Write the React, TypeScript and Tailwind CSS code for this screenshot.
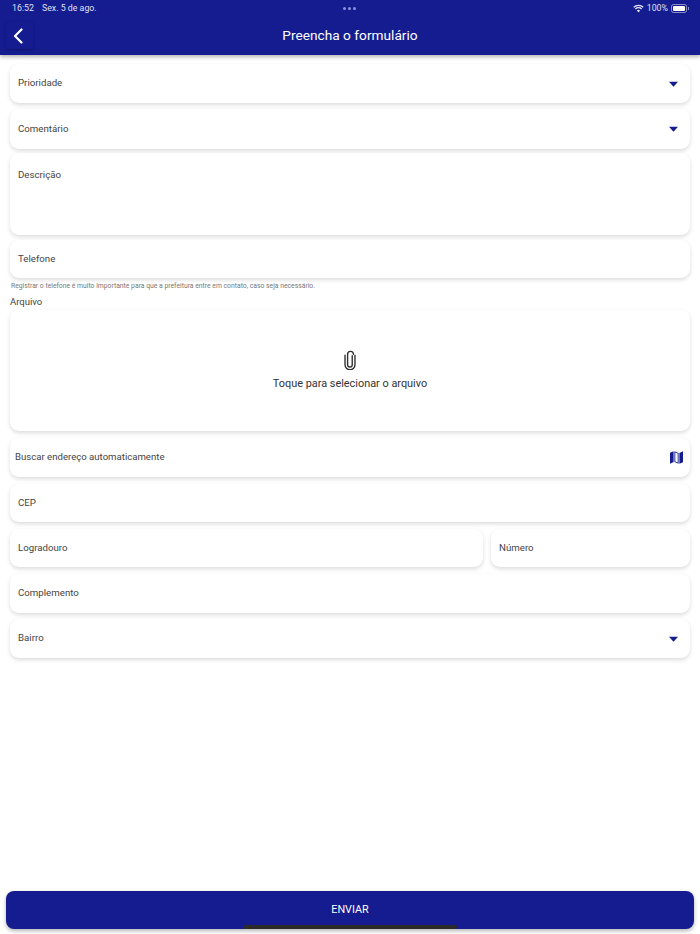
import { ReactNode } from "react";

const card = "bg-white rounded-[9px] shadow-[0_2px_4px_rgba(0,0,0,0.14)]";

function Caret() {
  return (
    <svg width="9" height="6" viewBox="0 0 10 6" className="text-[#141c8f]">
      <path d="M0 0.5h10L5 6z" fill="currentColor" />
    </svg>
  );
}

function Field({
  label,
  className = "",
  caret,
  children,
}: {
  label: string;
  className?: string;
  caret?: boolean;
  children?: ReactNode;
}) {
  return (
    <div className={`${card} flex items-center justify-between pl-2 pr-3 text-[9.7px] text-[#444] ${className}`}>
      <span>{label}</span>
      {caret && <Caret />}
      {children}
    </div>
  );
}

function WifiIcon() {
  return (
    <svg width="11" height="9" viewBox="0 0 12 9" fill="none" stroke="#e8e9f8" strokeWidth="1.4">
      <path d="M0.8 3.2a7.4 7.4 0 0 1 10.4 0" />
      <path d="M2.6 5a4.8 4.8 0 0 1 6.8 0" />
      <path d="M6 8.8 4.3 6.8a2.4 2.4 0 0 1 3.4 0z" fill="#e8e9f8" stroke="none" />
    </svg>
  );
}

function BatteryIcon() {
  return (
    <div className="flex items-center">
      <div className="w-[16px] h-[9px] rounded-[2.5px] border border-white/50 p-px">
        <div className="w-full h-full bg-white rounded-[1px]" />
      </div>
      <div className="w-px h-[3px] bg-white/50 ml-px" />
    </div>
  );
}

function ClipIcon() {
  return (
    <svg width="12" height="20" viewBox="0 0 14 22" fill="none" stroke="#2e2e2e" strokeWidth="1.6" strokeLinecap="round">
      <path d="M9.6 6v10.4a2.7 2.7 0 0 1-5.4 0V4.4a3.4 3.4 0 0 1 6.8 0" />
      <path d="M12.8 5.5v11a5.8 5.8 0 0 1-11.6 0V5.5" />
    </svg>
  );
}

function MapIcon() {
  return (
    <svg width="13" height="13" viewBox="0 0 13 13" className="text-[#141c8f]">
      <path d="M0 1.8 3.6 0.2v10.9L0 12.8zM9.4 1.9 13 0.2V11.2l-3.6 1.6z M4.4 0.3l4.2 1.6v10.8l-4.2-1.6V0.3z M5.3 1.6v8.9l2.4 0.9V2.5z" fill="currentColor" fillRule="evenodd" />
    </svg>
  );
}

export default function App() {
  return (
    <div className="relative h-[934px] bg-white flex flex-col font-['Roboto',sans-serif]">
      <header className="h-[55px] shrink-0 bg-[#141c8f] text-white shadow-[0_2px_4px_rgba(0,0,0,0.3)] flex flex-col">
        <div className="h-4 pt-px flex items-center justify-between pl-3 pr-[11px] text-[8.8px] text-[#dfe0f5] relative">
          <div className="flex gap-2">
            <span>16:52</span>
            <span>Sex. 5 de ago.</span>
          </div>
          <div className="absolute left-[343px] top-[7px] flex gap-[2px]">
            <div className="w-[3px] h-[3px] rounded-full bg-[#8f93dd]" />
            <div className="w-[3px] h-[3px] rounded-full bg-[#8f93dd]" />
            <div className="w-[3px] h-[3px] rounded-full bg-[#8f93dd]" />
          </div>
          <div className="flex items-center gap-[3px]">
            <WifiIcon />
            <span>100%</span>
            <BatteryIcon />
          </div>
        </div>
        <div className="flex-1 flex items-center justify-center relative pt-[1px]">
          <div className="absolute left-[6px] top-[6px] w-[27px] h-[27px] rounded-[4px] flex items-center justify-center pr-1 shadow-[0_1px_3px_rgba(0,0,0,0.25)]">
            <svg width="10" height="16" viewBox="0 0 10 16" fill="none" stroke="white" strokeWidth="2.2" strokeLinecap="round" strokeLinejoin="round">
              <path d="M8.5 1.5 2 8l6.5 6.5" />
            </svg>
          </div>
          <h1 className="text-[13.7px] leading-none font-normal">Preencha o formulário</h1>
        </div>
      </header>

      <main className="flex-1 flex flex-col px-[10px] pt-[9px] pb-[5px]">
        <Field label="Prioridade" caret className="h-[39px]" />
        <Field label="Comentário" caret className="h-[40px] mt-[6px]" />
        <div className={`${card} h-[82px] mt-[4px] pl-2 pt-[15px] text-[9.7px] leading-[14px] text-[#444]`}>Descrição</div>
        <Field label="Telefone" className="h-[38px] mt-[5px]" />
        <p className="ml-px mt-[3px] text-[6.8px] leading-[10px] text-[#777]">
          Registrar o telefone é muito importante para que a prefeitura entre em contato, caso seja necessário.
        </p>
        <p className="mt-[5px] text-[9.5px] leading-[12px] text-[#444]">Arquivo</p>
        <div className={`${card} h-[121px] mt-[2px] flex flex-col items-center justify-center gap-[6px]`}>
          <ClipIcon />
          <span className="text-[10.9px] leading-[15px] text-[#333]">Toque para selecionar o arquivo</span>
        </div>
        <div className={`${card} h-[39px] mt-[7px] flex items-center justify-between pl-[5px] pr-[7px] text-[9.6px] text-[#444]`}>
          <span>Buscar endereço automaticamente</span>
          <MapIcon />
        </div>
        <Field label="CEP" className="h-[38px] mt-[7px]" />
        <div className="flex gap-2 mt-[7px]">
          <Field label="Logradouro" className="h-[38px] flex-1" />
          <Field label="Número" className="h-[38px] w-[199px]" />
        </div>
        <Field label="Complemento" className="h-[39px] mt-[7px]" />
        <Field label="Bairro" caret className="h-[39px] mt-[6px]" />
        <button className="mt-auto -mx-1 h-[38px] rounded-lg bg-[#141c8f] text-white text-[10.8px] shadow-[0_2px_4px_rgba(0,0,0,0.3)]">
          ENVIAR
        </button>
      </main>

      <div className="absolute left-[243px] bottom-[5px] w-[214px] h-[4px] bg-[#2b2b2b] rounded-sm" />
    </div>
  );
}
